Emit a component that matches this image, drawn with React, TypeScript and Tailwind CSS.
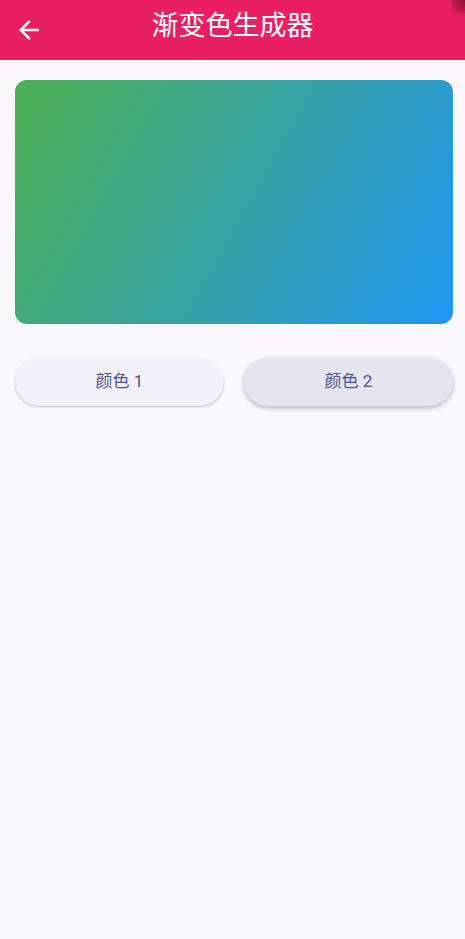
import React from 'react'

const font = { fontFamily: 'Roboto, "Noto Sans CJK SC", sans-serif' }

function BackArrow() {
  return (
    <svg width="30" height="30" viewBox="0 0 24 24" aria-hidden>
      <path fill="#ffffff" d="M20 11H7.83l5.59-5.59L12 4l-8 8 8 8 1.41-1.41L7.83 13H20v-2z" />
    </svg>
  )
}

export default function App() {
  return (
    <div className="relative flex min-h-[939px] w-full flex-col bg-[#faf8fe]" style={font}>
      <header className="relative flex h-[60px] items-center bg-[#ea1f63]">
        <button className="ml-[14px] flex h-[30px] w-[30px] items-center justify-center">
          <BackArrow />
        </button>
        <h1 className="absolute left-0 right-0 top-[6px] text-center text-[27px] leading-[40px] text-white">
          渐变色生成器
        </h1>
        <div className="pointer-events-none absolute right-0 top-0 h-[14px] w-[14px] bg-[radial-gradient(circle_at_top_right,#8a1030_0%,rgba(234,31,99,0)_100%)]" />
      </header>

      <main className="flex flex-col px-[15px] pt-[20px]">
        <div className="h-[244px] w-[438px] rounded-[12px] bg-[linear-gradient(119deg,#4caf50,#2196f3)]" />

        <div className="mt-[34px] grid w-[438px] grid-cols-2 gap-[20px]">
          <button className="h-[48px] rounded-full bg-[#f3f1f7] text-[17px] text-[#4a5294] shadow-[0_1px_2px_rgba(0,0,0,0.25)]">
            颜色 1
          </button>
          <button className="h-[48px] rounded-full bg-[#e6e4ef] text-[17px] text-[#4a5294] shadow-[0_2px_5px_rgba(0,0,0,0.28)]">
            颜色 2
          </button>
        </div>
      </main>
    </div>
  )
}
